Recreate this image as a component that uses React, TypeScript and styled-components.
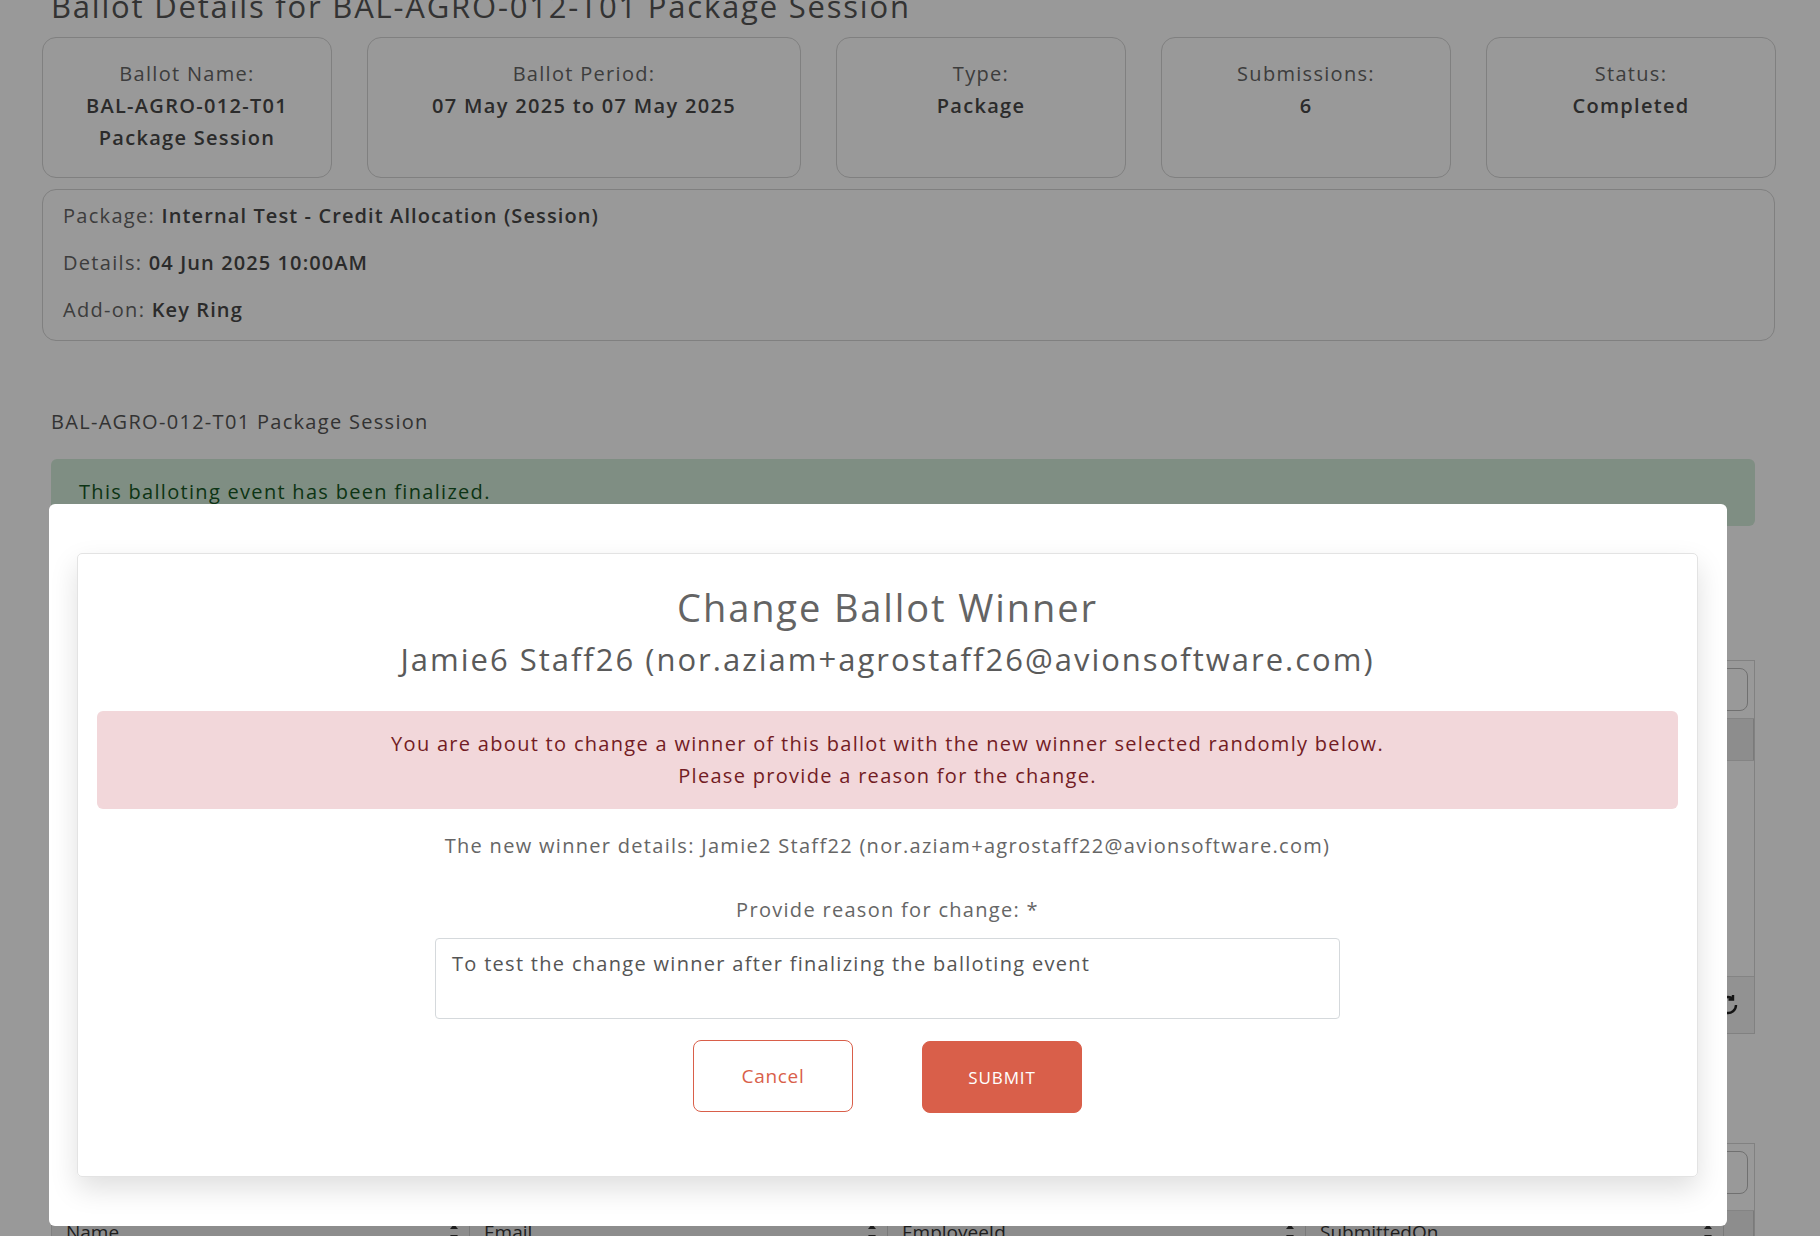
import React from 'react';
import styled, { createGlobalStyle, css } from 'styled-components';

const FONT = '"Open Sans", "Noto Sans", "Liberation Sans", sans-serif';
const ACCENT = '#d95f4a';

// Montserrat is not available, so Open Sans is spread out to keep the widths
const body = css`
  font-size: 20px;
  letter-spacing: 1.3px;
  line-height: 32px;
`;

const GlobalStyle = createGlobalStyle`
  html, body {
    margin: 0;
    padding: 0;
    height: 1236px;
    overflow: hidden;
    background: #fff;
    font-family: ${FONT};
    color: #666;
  }
  * { box-sizing: border-box; }
`;

const Page = styled.main`
  padding: 0 45px 0 42px;
  margin-top: -12px;
`;

const PageTitle = styled.h2`
  margin: 0 0 13px 9px;
  font-size: 31px;
  font-weight: 500;
  letter-spacing: 1.8px;
  line-height: 36px;
  color: #555;
`;

const SummaryRow = styled.div`
  display: grid;
  grid-template-columns: 290px 434px 290px 290px 290px;
  column-gap: 35px;
`;

const cardBorder = css`
  border: 1px solid #d5d5d5;
  border-radius: 14px;
`;

const SummaryCard = styled.div`
  ${cardBorder};
  height: 141px;
  padding-top: 20px;
  text-align: center;
  ${body};
`;

const Label = styled.div`
  color: #666;
`;

const Value = styled.div`
  color: #484848;
  font-weight: 600;
`;

const PackageCard = styled.div`
  ${cardBorder};
  margin-top: 11px;
  height: 152px;
  padding: 10px 20px 0;
  display: flex;
  flex-direction: column;
  gap: 15px;
  ${body};
`;

const PackageLine = styled.div`
  color: #666;
  b {
    color: #484848;
    font-weight: 600;
    letter-spacing: 1.1px;
  }
`;

const Section = styled.section<{ $top: number }>`
  padding-left: 9px;
  margin-top: ${(p) => p.$top}px;
`;

const SectionTitle = styled.div`
  ${body};
  color: #555;
`;

const SuccessAlert = styled.div`
  margin: 21px 20px 0 0;
  padding: 17px 28px 0;
  height: 67px;
  background: #d4edda;
  color: #155724;
  border-radius: 6px;
  ${body};
`;

const TableBox = styled.div<{ $top: number }>`
  margin-top: ${(p) => p.$top}px;
  margin-right: 20px;
  border: 1px solid #d8d8d8;
`;

const TableToolbar = styled.div<{ $height: number }>`
  height: ${(p) => p.$height}px;
  display: flex;
  justify-content: flex-end;
  align-items: flex-start;
  padding: 7px 6px 0 0;
`;

const ToolButton = styled.div`
  width: 60px;
  height: 43px;
  border: 1px solid #bbb;
  border-radius: 8px;
`;

const HeaderRow = styled.div`
  display: grid;
  grid-template-columns: repeat(4, 418px) 1fr;
  background: #ececec;
  border-top: 1px solid #ddd;
  height: 42px;
  font-size: 19px;
  color: #333;
`;

const HeaderCell = styled.div`
  display: flex;
  align-items: center;
  justify-content: space-between;
  padding: 0 10px 0 14px;
  border-right: 1px solid #ccc;
`;

const TableBody = styled.div`
  height: 216px;
  border-top: 1px solid #ddd;
`;

const TableFooter = styled.div`
  height: 57px;
  border-top: 1px solid #ddd;
  background: #f3f3f3;
  display: flex;
  justify-content: flex-end;
  align-items: center;
  padding-right: 14px;
  color: #222;
`;

const Backdrop = styled.div`
  position: fixed;
  inset: 0;
  background: rgba(0, 0, 0, 0.4);
`;

const Dialog = styled.div`
  position: fixed;
  left: 49px;
  top: 504px;
  width: 1678px;
  height: 722px;
  background: #fff;
  border-radius: 6px;
  padding: 49px 29px 0 28px;
`;

const DialogCard = styled.div`
  height: 624px;
  border: 1px solid #e3e3e3;
  border-radius: 5px;
  box-shadow: 0 12px 28px rgba(0, 0, 0, 0.13);
  padding: 29px 19px 0;
  display: flex;
  flex-direction: column;
  align-items: center;
  text-align: center;
`;

const DialogTitle = styled.h3`
  margin: 0;
  font-size: 38px;
  font-weight: 500;
  letter-spacing: 1.9px;
  line-height: 48px;
  color: #646464;
`;

const DialogSubtitle = styled.h4`
  margin: 6px 0 0;
  font-size: 31px;
  font-weight: 500;
  letter-spacing: 2px;
  line-height: 44px;
  color: #5a5a5a;
`;

const DangerAlert = styled.div`
  align-self: stretch;
  margin-top: 30px;
  padding: 17px 0;
  background: #f2d7da;
  color: #721c24;
  border-radius: 6px;
  ${body};
`;

const InfoText = styled.p<{ $top: number }>`
  margin: ${(p) => p.$top}px 0 0;
  ${body};
  color: #666;
`;

const ReasonInput = styled.textarea`
  margin-top: 12px;
  width: 905px;
  height: 81px;
  padding: 9px 16px;
  border: 1px solid #d5d9dc;
  border-radius: 4px;
  resize: none;
  font-family: ${FONT};
  ${body};
  color: #555;
  outline: none;
`;

const ButtonRow = styled.div`
  margin-top: 21px;
  display: flex;
  gap: 69px;
`;

const Button = styled.button<{ $primary?: boolean }>`
  width: 160px;
  height: 72px;
  border-radius: 8px;
  border: 1px solid ${ACCENT};
  font-family: ${FONT};
  cursor: pointer;
  ${(p) =>
    p.$primary
      ? css`
          background: ${ACCENT};
          color: #fff;
          font-size: 17px;
          letter-spacing: 0.9px;
          text-transform: uppercase;
          margin-top: 1px;
        `
      : css`
          background: #fff;
          color: ${ACCENT};
          font-size: 19px;
          letter-spacing: 0.7px;
        `}
`;

const SortIcon = () => (
  <svg width="10" height="18" viewBox="0 0 10 18" fill="#333">
    <path d="M5 1 L9 6 H1 Z" />
    <path d="M5 17 L9 12 H1 Z" />
  </svg>
);

const RefreshIcon = () => (
  <svg width="24" height="24" viewBox="0 0 24 24" fill="none" stroke="#222" strokeWidth="2.4">
    <path d="M20 12a8 8 0 1 1-3-6.2" />
    <path d="M17 2v4.5h-4.5" />
  </svg>
);

const summary = [
  { label: 'Ballot Name:', value: ['BAL-AGRO-012-T01', 'Package Session'] },
  { label: 'Ballot Period:', value: ['07 May 2025 to 07 May 2025'] },
  { label: 'Type:', value: ['Package'] },
  { label: 'Submissions:', value: ['6'] },
  { label: 'Status:', value: ['Completed'] },
];

const columns = ['Name', 'Email', 'EmployeeId', 'SubmittedOn'];

const SubmissionTable = ({
  top,
  toolbarHeight,
  withBody,
}: {
  top: number;
  toolbarHeight: number;
  withBody?: boolean;
}) => (
  <TableBox $top={top}>
    <TableToolbar $height={toolbarHeight}>
      <ToolButton />
    </TableToolbar>
    <HeaderRow>
      {columns.map((c) => (
        <HeaderCell key={c}>
          {c}
          <SortIcon />
        </HeaderCell>
      ))}
      <HeaderCell />
    </HeaderRow>
    {withBody && (
      <>
        <TableBody />
        <TableFooter>
          <RefreshIcon />
        </TableFooter>
      </>
    )}
  </TableBox>
);

const App = () => (
  <>
    <GlobalStyle />
    <Page>
      <PageTitle>Ballot Details for BAL-AGRO-012-T01 Package Session</PageTitle>
      <SummaryRow>
        {summary.map((item) => (
          <SummaryCard key={item.label}>
            <Label>{item.label}</Label>
            {item.value.map((line) => (
              <Value key={line}>{line}</Value>
            ))}
          </SummaryCard>
        ))}
      </SummaryRow>
      <PackageCard>
        <PackageLine>
          Package: <b>Internal Test - Credit Allocation (Session)</b>
        </PackageLine>
        <PackageLine>
          Details: <b>04 Jun 2025 10:00AM</b>
        </PackageLine>
        <PackageLine>
          Add-on: <b>Key Ring</b>
        </PackageLine>
      </PackageCard>
      <Section $top={65}>
        <SectionTitle>BAL-AGRO-012-T01 Package Session</SectionTitle>
        <SuccessAlert>This balloting event has been finalized.</SuccessAlert>
      </Section>
      <Section $top={0}>
        <SubmissionTable top={134} toolbarHeight={57} withBody />
        <SubmissionTable top={109} toolbarHeight={66} />
      </Section>
    </Page>
    <Backdrop />
    <Dialog role="dialog">
      <DialogCard>
        <DialogTitle>Change Ballot Winner</DialogTitle>
        <DialogSubtitle>Jamie6 Staff26 (nor.aziam+agrostaff26@avionsoftware.com)</DialogSubtitle>
        <DangerAlert>
          You are about to change a winner of this ballot with the new winner selected randomly below.
          <br />
          Please provide a reason for the change.
        </DangerAlert>
        <InfoText $top={21}>
          The new winner details: Jamie2 Staff22 (nor.aziam+agrostaff22@avionsoftware.com)
        </InfoText>
        <InfoText $top={32}>Provide reason for change: *</InfoText>
        <ReasonInput
          readOnly
          value="To test the change winner after finalizing the balloting event"
        />
        <ButtonRow>
          <Button>Cancel</Button>
          <Button $primary>Submit</Button>
        </ButtonRow>
      </DialogCard>
    </Dialog>
  </>
);

export default App;
